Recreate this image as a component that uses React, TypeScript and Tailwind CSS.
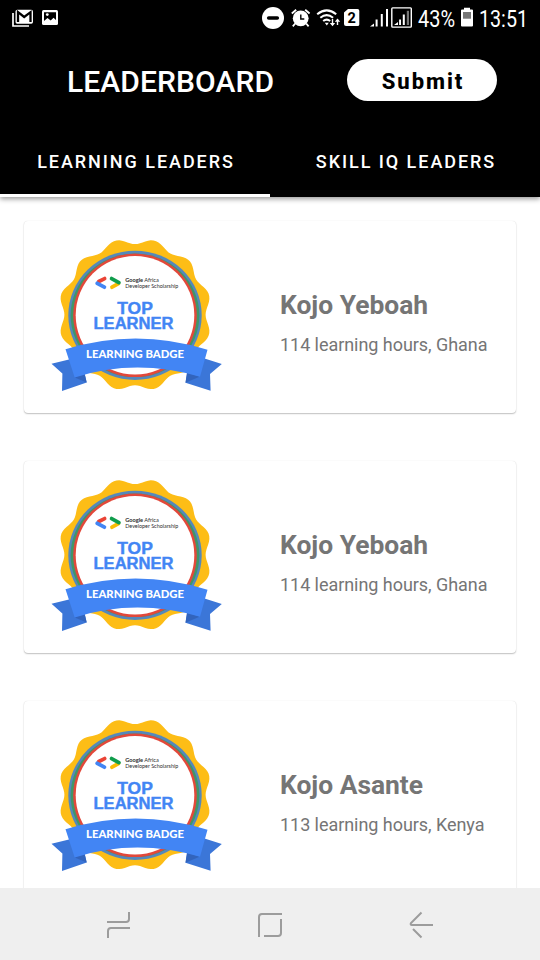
import React from "react";

const LOBES = 12;

// Wavy outline of the golden rosette behind the badge rings.
function rosettePath(cx: number, cy: number) {
  const points: string[] = [];
  for (let i = 0; i < 360; i += 2) {
    const a = (i * Math.PI) / 180;
    const r = 73.6 - 3 * Math.cos(LOBES * a);
    points.push(`${(cx + r * Math.sin(a)).toFixed(2)},${(cy - r * Math.cos(a)).toFixed(2)}`);
  }
  return `M${points.join("L")}Z`;
}

const ROSETTE = rosettePath(135, 314.7);

function Badge() {
  return (
    <svg className="block h-[156px] w-[174px] shrink-0" viewBox="50 238 174 156">
      <path d={ROSETTE} fill="#fdbd16" />
      <ellipse cx="135" cy="315.3" rx="66.7" ry="64.6" fill="#5588bb" />
      <ellipse cx="135" cy="315.3" rx="64.4" ry="61.8" fill="#3f9669" />
      <ellipse cx="135" cy="315.3" rx="61.8" ry="61.8" fill="#e2483a" />
      <ellipse cx="135" cy="315.3" rx="59.3" ry="59.3" fill="#fff" />
      <g fill="none" strokeWidth="3.8" strokeLinecap="round">
        <path d="M98.8 281.5L104.6 278.6" stroke="#ea4335" />
        <path d="M97.2 283.3L104.4 287.2" stroke="#4285f4" />
        <path d="M112 287.2L118.4 283.6" stroke="#fbbc05" />
        <path d="M111.6 278.6L118.9 282.6" stroke="#109d4c" />
      </g>
      <g fontFamily="Lato, 'Open Sans', sans-serif" fontSize="5.6" fill="#2c2c2c">
        <text x="125.3" y="281.5" textLength="33.5" lengthAdjust="spacingAndGlyphs"><tspan fontWeight="700">Google</tspan> Africa</text>
        <text x="125.3" y="288" textLength="53" lengthAdjust="spacingAndGlyphs">Developer Scholarship</text>
      </g>
      <g fontFamily="'Liberation Sans', sans-serif" fontWeight="700" fill="#4285f4" stroke="#4285f4" strokeWidth="0.4">
        <text x="117.3" y="314" fontSize="15.6" textLength="35.5" lengthAdjust="spacingAndGlyphs">TOP</text>
        <text x="93.5" y="329" fontSize="15.6" textLength="80" lengthAdjust="spacingAndGlyphs">LEARNER</text>
      </g>
      <path d="M51.5 363.8L69 359.5L84.5 373.5L86.7 382.4L62 391L62.4 373.4Z" fill="#3b76d8" />
      <path d="M221.8 364L203 358L187 374L185.5 382.7L210.6 390.7L210 374Z" fill="#3b76d8" />
      <path d="M74.7 377.4L84.5 373L86.7 382.4Z" fill="#3264bd" />
      <path d="M199.5 376.8L187 372.5L185.5 382.7Z" fill="#3264bd" />
      <path d="M65.5 349.3Q136 327.5 207.5 349.7L200 376.8Q136 358 74.7 377.4Z" fill="#4285f4" />
      <text x="86" y="358.4" fontFamily="Lato, 'Liberation Sans', sans-serif" fontWeight="900" fontSize="10.6" fill="#fff" textLength="98" lengthAdjust="spacingAndGlyphs">LEARNING BADGE</text>
    </svg>
  );
}

function StatusBar() {
  return (
    <div className="flex h-9 shrink-0 items-center">
      <svg className="h-9 w-[414px] shrink-0" viewBox="0 0 414 36" fill="none">
        <path d="M13 13V26H29" stroke="#fff" strokeWidth="1.7" />
        <rect x="15.5" y="9.7" width="17.5" height="14" rx="1.7" fill="#fff" />
        <path d="M18 22V12.2L24.2 17L30.5 12.2V22" stroke="#000" strokeWidth="2.3" />
        <rect x="42" y="10" width="16" height="15" rx="1.5" fill="#fff" />
        <path d="M44 12.3H56V20L53.5 17.8L50.7 20.5L47.5 18L44 21Z" fill="#000" />
        <circle cx="47.3" cy="14.6" r="1.4" fill="#fff" />
        <circle cx="273" cy="18" r="11" fill="#fff" />
        <path d="M268.7 18H277.3" stroke="#000" strokeWidth="3.6" strokeLinecap="round" />
        <circle cx="300.7" cy="18.3" r="7.9" fill="#fff" />
        <path d="M291.8 13.5L296.2 9.7M305.2 9.7L309.6 13.5M295.2 23.5L292.8 26.3M306.2 23.5L308.6 26.3" stroke="#fff" strokeWidth="1.8" />
        <path d="M300.8 14.5V19H304.3" stroke="#000" strokeWidth="1.4" />
        <g stroke="#fff" strokeWidth="2">
          <path d="M317.2 14.3Q326.7 6.5 336.2 14.3" />
          <path d="M320.3 17.8Q326.7 12.5 333.1 17.8" />
          <path d="M323.2 21.1Q326.7 18.2 330.2 21.1" />
          <path d="M332.5 19V24.8M337.5 25V19.5" strokeWidth="1.4" />
        </g>
        <path d="M324.8 22.8L326.8 25.5L328.8 22.8ZM329.8 23H335.2L332.5 26.3ZM334.8 21.8H340.2L337.5 18.5Z" fill="#fff" />
        <path d="M344 12.5L348 9H357.5Q359.3 9 359.3 10.8V24.5Q359.3 26 357.5 26H346Q344 26 344 24Z" fill="#fff" />
        <text x="347.4" y="23" fontFamily="Roboto, sans-serif" fontSize="14.5" fontWeight="700" fill="#000">2</text>
        <path d="M370 26.5L374 23.5V26.5ZM375.6 19.5H377.6V26.5H375.6ZM380.8 14H382.8V26.5H380.8ZM386 9H388V26.5H386Z" fill="#fff" />
        <rect x="391.8" y="7.9" width="19.5" height="19.2" rx="0.8" fill="#000" stroke="#fff" strokeWidth="1.4" />
        <path d="M394 25L398 22V25ZM399.1 19.5H401V25H399.1ZM402.8 14.5H404.8V25H402.8Z" fill="#fff" />
        <path d="M406.8 10.8H409V25H406.8Z" fill="#777" />
      </svg>
      <svg className="h-9 w-[126px]" viewBox="414 0 126 36">
        <g fontFamily="Roboto, sans-serif" fontSize="23.5" fill="#fff">
          <text x="418" y="26.7" textLength="37" lengthAdjust="spacingAndGlyphs">43%</text>
          <text x="479" y="26.7" textLength="49" lengthAdjust="spacingAndGlyphs">13:51</text>
        </g>
        <path d="M464 7.8H470V9.5H472Q473 9.5 473 10.5V25.5Q473 26.5 472 26.5H462Q461 26.5 461 25.5V10.5Q461 9.5 462 9.5H464Z" fill="#fff" />
        <rect x="463" y="12" width="8" height="6.7" fill="#777" />
      </svg>
    </div>
  );
}

function LeaderCard({ name, detail }: { name: string; detail: string }) {
  return (
    <article className="flex h-48 shrink-0 rounded bg-white pt-[17px] pl-[26px] shadow-[0_1px_1.5px_rgba(0,0,0,0.24),0_0_1px_rgba(0,0,0,0.14)]">
      <Badge />
      <div className="ml-14 pt-[51px] whitespace-nowrap text-[#757575]">
        <h2 className="text-[26.4px] leading-8 font-bold">{name}</h2>
        <p className="mt-3 text-[18px] leading-6 tracking-[-0.05px]">{detail}</p>
      </div>
    </article>
  );
}

const leaders = [
  { name: "Kojo Yeboah", detail: "114 learning hours, Ghana" },
  { name: "Kojo Yeboah", detail: "114 learning hours, Ghana" },
  { name: "Kojo Asante", detail: "113 learning hours, Kenya" },
];

export default function App() {
  return (
    <div className="flex h-[960px] w-[540px] flex-col overflow-hidden bg-white font-['Roboto',sans-serif]">
      <header className="z-10 flex h-[197px] shrink-0 flex-col bg-black text-white shadow-[0_2px_5px_rgba(0,0,0,0.4)]">
        <StatusBar />
        <div className="flex h-[88px] items-center justify-between pr-[43px] pl-[67px]">
          <h1 className="pt-[3px] text-[30px] leading-9 font-medium tracking-[0.1px]">LEADERBOARD</h1>
          <button className="h-[42px] w-[150px] rounded-full bg-white pt-[3px] pl-[2px] text-[22px] font-extrabold tracking-[1.95px] text-black">Submit</button>
        </div>
        <nav className="grid flex-1 grid-cols-2 text-[18px] font-medium tracking-[1.95px]">
          <button className="border-b-[3px] border-white pt-[5px] pl-[2px]">LEARNING LEADERS</button>
          <button className="border-b-[3px] border-black pt-[5px] pl-[2px]">SKILL IQ LEADERS</button>
        </nav>
      </header>
      <main className="flex min-h-0 flex-1 flex-col gap-12 overflow-hidden px-6 pt-6">
        {leaders.map((leader, i) => (
          <LeaderCard key={i} {...leader} />
        ))}
      </main>
      <footer className="flex h-[72px] shrink-0 items-center justify-between bg-[#efefef] px-[105px] pt-[2px]">
        <svg className="h-7 w-7" viewBox="105 911 28 28" fill="none" stroke="#9c9c9c" strokeWidth="2">
          <path d="M129 912V919Q129 922 126 922H107M108 938V931Q108 928 111 928H130" />
        </svg>
        <svg className="h-7 w-7" viewBox="256 911 28 28" fill="none" stroke="#9c9c9c" strokeWidth="2">
          <path d="M259 937V917Q259 914 262 914H282M281 919V933Q281 936 278 936H264" />
        </svg>
        <svg className="h-7 w-7" viewBox="407 911 28 28" fill="none" stroke="#9c9c9c" strokeWidth="2">
          <path d="M421.5 912.5L411 923Q410 925 412 925H433M413 929L421.5 937.5" />
        </svg>
      </footer>
    </div>
  );
}
